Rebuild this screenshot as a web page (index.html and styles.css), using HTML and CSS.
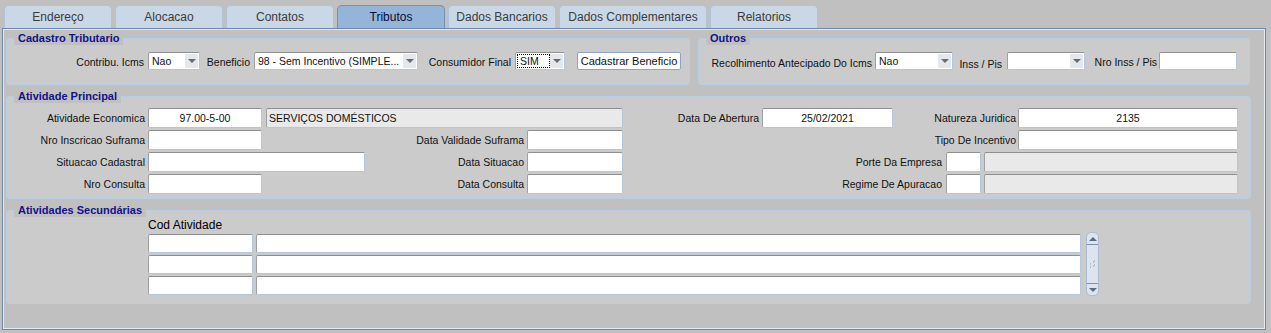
FILE: index.html
```html
<!DOCTYPE html>
<html lang="pt">

<head>
    <meta charset="UTF-8" />
    <title>Tributos</title>
    <link rel="stylesheet" href="styles.css">
</head>

<body>
    <!-- abas -->
    <div class="tabs">
        <div class="tab">Endereço</div>
        <div class="tab">Alocacao</div>
        <div class="tab">Contatos</div>
        <div class="tab active">Tributos</div>
        <div class="tab">Dados Bancarios</div>
        <div class="tab wide">Dados Complementares</div>
        <div class="tab">Relatorios</div>
    </div>

    <div class="frame">
        <div class="top-row">
            <fieldset class="panel cadastro">
                <legend>Cadastro Tributario</legend>
                <div class="cad-row">
                    <label>Contribu. Icms</label>
                    <div class="select"><span>Nao</span><i></i></div>
                    <label>Beneficio</label>
                    <div class="select"><span>98 - Sem Incentivo (SIMPLE...</span><i></i></div>
                    <label>Consumidor Final</label>
                    <div class="select focus"><span>SIM</span><i></i></div>
                    <div></div>
                    <div class="btn">Cadastrar Beneficio</div>
                </div>
            </fieldset>

            <fieldset class="panel outros">
                <legend>Outros</legend>
                <div class="out-row">
                    <label>Recolhimento Antecipado Do Icms</label>
                    <div class="select"><span>Nao</span><i></i></div>
                    <label class="low">Inss / Pis</label>
                    <div class="select"><span></span><i></i></div>
                    <label class="high">Nro Inss / Pis</label>
                    <div class="field"></div>
                </div>
            </fieldset>
        </div>

        <fieldset class="panel principal">
            <legend>Atividade Principal</legend>
            <div class="ap-grid">
                <!-- linha 1 -->
                <label class="c1">Atividade Economica</label>
                <div class="field center c2">97.00-5-00</div>
                <div class="field off desc">SERVIÇOS DOMÉSTICOS</div>
                <label class="c7">Data De Abertura</label>
                <div class="field center c8">25/02/2021</div>
                <label class="nat">Natureza Juridica</label>
                <div class="field center c13">2135</div>
                <!-- linha 2 -->
                <label class="c1">Nro Inscricao Suframa</label>
                <div class="field c2"></div>
                <label class="mid">Data Validade Suframa</label>
                <div class="field c6"></div>
                <label class="tipo">Tipo De Incentivo</label>
                <div class="field c13"></div>
                <!-- linha 3 -->
                <label class="c1">Situacao Cadastral</label>
                <div class="field sit"></div>
                <label class="c5">Data Situacao</label>
                <div class="field c6"></div>
                <label class="porte">Porte Da Empresa</label>
                <div class="field c10"></div>
                <div class="field off last"></div>
                <!-- linha 4 -->
                <label class="c1">Nro Consulta</label>
                <div class="field c2"></div>
                <label class="mid">Data Consulta</label>
                <div class="field c6"></div>
                <label class="porte">Regime De Apuracao</label>
                <div class="field c10"></div>
                <div class="field off last"></div>
            </div>
        </fieldset>

        <fieldset class="panel secundarias">
            <legend>Atividades Secundárias</legend>
            <div class="sec-grid">
                <div class="sec-head">Cod Atividade</div>
                <div class="field s-cod"></div>
                <div class="field s-desc"></div>
                <div class="scroll">
                    <div class="up"></div>
                    <div class="track">
                        <svg width="7" height="9" viewBox="0 0 7 9">
                            <path d="M5 1h1M4 2h1M1 4h1M5 5h1M4 6h1M1 7h1" stroke="#8a9cb8" stroke-width="1" />
                        </svg>
                    </div>
                    <div class="down"></div>
                </div>
                <div class="field s-cod"></div>
                <div class="field s-desc"></div>
                <div class="field s-cod"></div>
                <div class="field s-desc"></div>
            </div>
        </fieldset>
    </div>
</body>

</html>
```

FILE: styles.css
```css
* {
    box-sizing: border-box;
}

body {
    margin: 0;
    padding: 0;
    width: 1271px;
    height: 333px;
    overflow: hidden;
    background-color: #c0c0c0;
    font-family: "Liberation Sans", Arial, sans-serif;
    font-size: 10.5px;
    color: #111;
}

/* abas */
.tabs {
    display: flex;
    gap: 3px;
    height: 28px;
    padding: 5px 0 0 4px;
}

.tab {
    width: 108px;
    height: 23px;
    padding-top: 1px;
    line-height: 21px;
    text-align: center;
    font-size: 12px;
    color: #3c3c3c;
    background-color: #c9d7e6;
    border: 1px solid #b3c3d6;
    border-bottom: none;
    border-radius: 5px 5px 0 0;
}

.tab.wide {
    width: 148px;
}

.tab.active {
    background-color: #94b5d7;
    border-color: #7490b5;
    color: #0c0c36;
}

/* moldura */
.frame {
    display: flex;
    flex-direction: column;
    gap: 5px;
    width: 1264px;
    height: 302px;
    margin-left: 2px;
    padding: 3px 0 0 3px;
    border: 1px solid #6f86ab;
    box-shadow: inset 1px 1px 0 #e2e9f1, inset -1px -1px 0 #e2e9f1;
}

.top-row {
    display: flex;
    gap: 8px;
}

.panel {
    margin: 0;
    padding: 0;
    border: 1px solid #b9cde4;
    border-radius: 4px;
    background-color: #cbcbcb;
}

.panel legend {
    margin-left: 7px;
    padding: 0 4px;
    line-height: 13px;
    font-size: 11px;
    font-weight: bold;
    color: #12128a;
    background-color: #c0c0c0;
}

label {
    display: block;
    text-align: right;
    padding-right: 3px;
    white-space: nowrap;
}

.cadastro {
    width: 684px;
    padding: 7px 0 14px;
}

.outros {
    width: 552px;
    padding: 7px 0 14px;
}

.cad-row {
    display: grid;
    grid-template-columns: 141px 52px 54px 164px 97px 50px 12px 104px;
    align-items: center;
    height: 18px;
}

.cad-row label {
    padding-top: 2px;
    padding-right: 4px;
}

.out-row {
    display: grid;
    grid-template-columns: 176px 78px 54px 78px 74px 78px;
    align-items: center;
    height: 18px;
}

.out-row label {
    padding-top: 3px;
}

.out-row label.low {
    padding-top: 6px;
    padding-right: 5px;
}

.out-row label.high {
    padding-top: 1px;
    padding-right: 2px;
}

/* campos */
.field {
    height: 20px;
    padding: 0 2px;
    line-height: 18px;
    font-size: 10.5px;
    white-space: nowrap;
    overflow: hidden;
    background-color: #fff;
    border: 1px solid #b4c6dc;
    border-top-color: #8f8f8f;
    border-left-color: #a0a0a0;
    border-radius: 2px;
}

.out-row .field {
    height: 18px;
}

.field.center {
    text-align: center;
}

.field.off {
    background-color: #e9e9e9;
}

.select {
    display: flex;
    height: 18px;
    padding: 1px;
    background-color: #fff;
    border: 1px solid #b4c6dc;
    border-top-color: #8f8f8f;
    border-left-color: #a0a0a0;
    border-radius: 2px;
}

.select span {
    flex: 1;
    padding-left: 2px;
    line-height: 14px;
    font-size: 10.5px;
    white-space: nowrap;
    overflow: hidden;
}

.select.focus span {
    border: 1px dotted #000;
    line-height: 12px;
}

.select i {
    position: relative;
    width: 13px;
    background-color: #e4e7ec;
    border-radius: 1px;
}

.select i::after {
    content: "";
    position: absolute;
    left: 3px;
    top: 5px;
    border-left: 4px solid transparent;
    border-right: 4px solid transparent;
    border-top: 4px solid #6b6b6b;
}

.btn {
    height: 18px;
    line-height: 16px;
    text-align: center;
    font-size: 11px;
    background-color: #fff;
    border: 1px solid #8ea4c2;
    border-radius: 2px;
}

/* atividade principal */
.principal {
    width: 1245px;
    padding: 5px 0 4px;
}

.ap-grid {
    display: grid;
    grid-template-columns: 141px 114px 4px 99px 162px 96px 139px 131px 53px 35px 3px 34px 220px;
    grid-template-rows: repeat(4, 20px);
    row-gap: 2px;
    align-items: center;
}

.c1 { grid-column: 1; }
.c2 { grid-column: 2; }
.c5 { grid-column: 5; }
.c6 { grid-column: 6; }
.c7 { grid-column: 7; }
.c8 { grid-column: 8; }
.c10 { grid-column: 10; }
.c13 { grid-column: 13; }
.desc { grid-column: 4 / 7; }
.nat { grid-column: 9 / 13; padding-right: 2px; }
.mid { grid-column: 3 / 6; }
.tipo { grid-column: 7 / 13; padding-right: 2px; }
.sit { grid-column: 2 / 5; }
.porte { grid-column: 7 / 10; padding-right: 4px; }
.last { grid-column: 12 / 14; }

/* atividades secundarias */
.secundarias {
    width: 1245px;
    padding: 1px 0 8px;
}

.sec-grid {
    display: grid;
    grid-template-columns: 141px 105px 3px 825px 5px 13px;
    grid-template-rows: 14px repeat(3, 19px);
    row-gap: 2px;
}

.sec-head {
    grid-column: 2 / 5;
    font-size: 12px;
    line-height: 14px;
    color: #000;
}

.s-cod {
    grid-column: 2;
    height: 19px;
}

.s-desc {
    grid-column: 4;
    height: 19px;
}

.scroll {
    grid-column: 6;
    grid-row: 2 / 5;
    display: flex;
    flex-direction: column;
    margin: -2px 0 -1px;
    background-color: #dde4ed;
    border: 1px solid #aebcd0;
    border-radius: 5px;
}

.scroll .up,
.scroll .down {
    position: relative;
    height: 12px;
}

.scroll .up {
    border-bottom: 1px solid #7d92b1;
}

.scroll .down {
    border-top: 1px solid #7d92b1;
}

.scroll .up::after,
.scroll .down::after {
    content: "";
    position: absolute;
    left: 2px;
    border-left: 4px solid transparent;
    border-right: 4px solid transparent;
}

.scroll .up::after {
    top: 4px;
    border-bottom: 4px solid #5e6a7e;
}

.scroll .down::after {
    top: 4px;
    border-top: 4px solid #5e6a7e;
}

.scroll .track {
    flex: 1;
    display: flex;
    align-items: center;
    justify-content: center;
}
```
